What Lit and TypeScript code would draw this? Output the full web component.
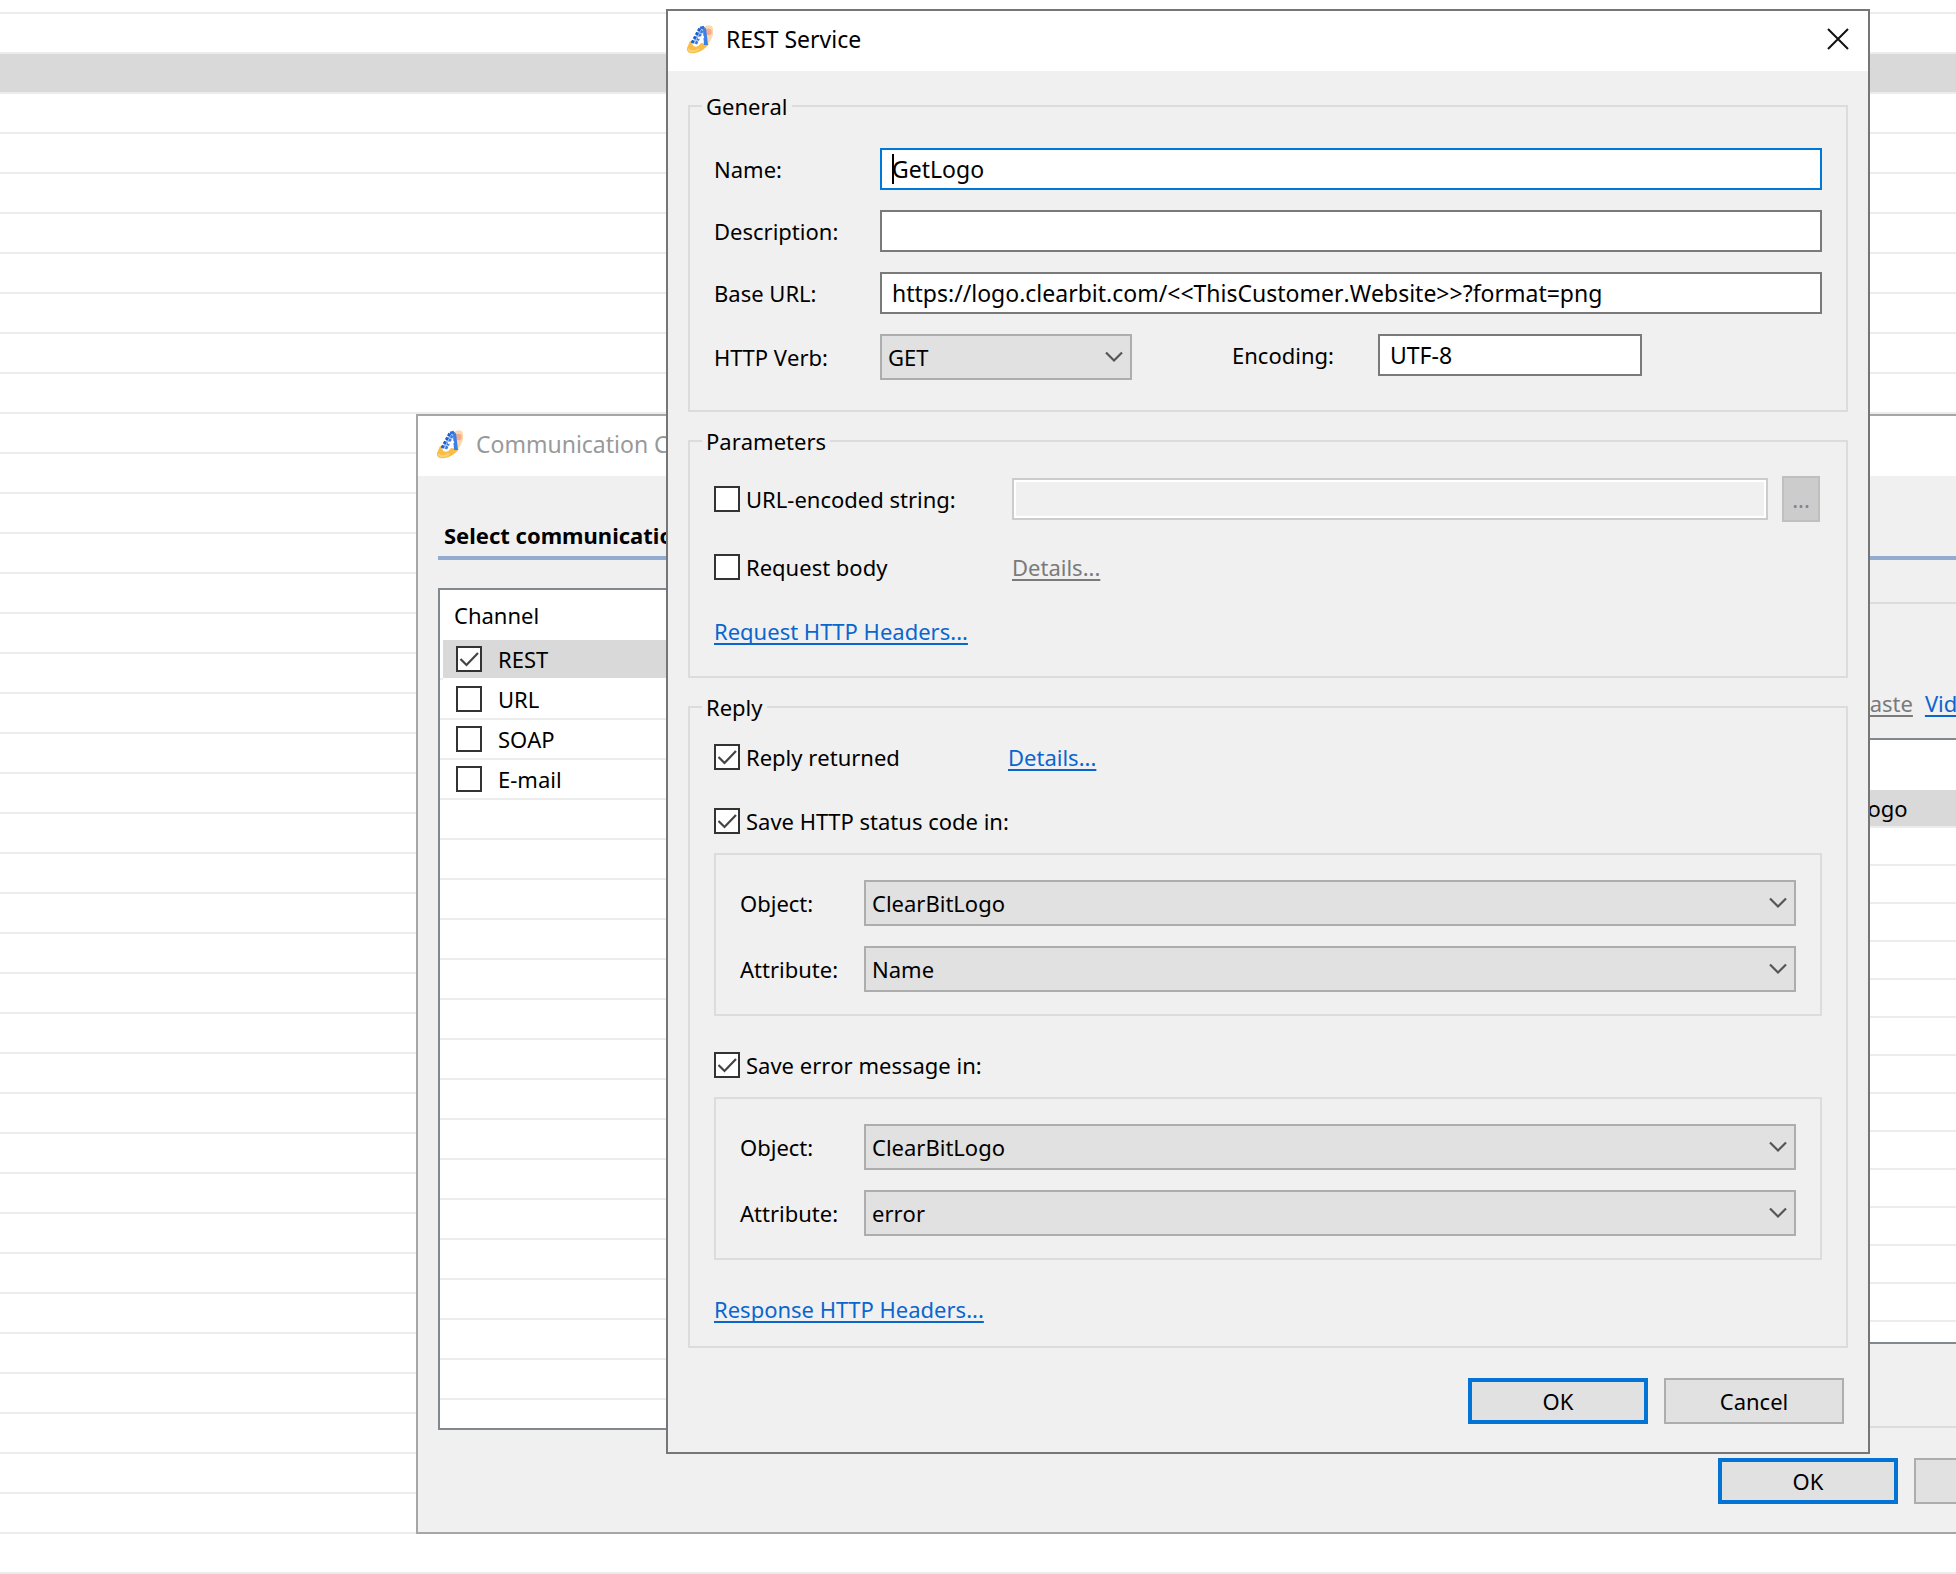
import { LitElement, html, svg, css } from "lit";
import { customElement } from "lit/decorators.js";

const shared = css`
  * {
    box-sizing: border-box;
  }
  :host {
    font: 22px/30px "Noto Sans", "Open Sans", sans-serif;
    font-kerning: none;
    color: #000;
  }
  button,
  input,
  select {
    font: inherit;
    font-kerning: none;
    color: inherit;
    margin: 0;
    border-radius: 0;
    outline: none;
  }
  a {
    color: #0a66cf;
    text-decoration: underline;
    text-decoration-thickness: 2px;
    text-underline-offset: 3px;
    text-decoration-skip-ink: none;
    white-space: nowrap;
  }
  a.off {
    color: #7a7a7a;
  }
  .titlebar {
    display: flex;
    align-items: center;
    height: 60px;
    padding: 0 19px 4px 18px;
    background: #fff;
  }
  .titlebar h1 {
    flex: 1;
    margin: 0 0 0 12px;
    font-size: 23px;
    line-height: 30px;
    font-weight: normal;
  }
  .titlebar svg {
    display: block;
  }
  .btn {
    width: 180px;
    height: 46px;
    padding: 0;
    border: 2px solid #adadad;
    background: #e1e1e1;
  }
  .btn.primary {
    border: 4px solid #0473d6;
  }
  .check {
    display: flex;
    align-items: center;
    gap: 6px;
    white-space: nowrap;
  }
  .box {
    display: grid;
    width: 26px;
    height: 26px;
  }
  .box > * {
    grid-area: 1 / 1;
  }
  .box input {
    appearance: none;
    width: 26px;
    height: 26px;
    border: 2px solid #333;
    background: #fff;
  }
  .box svg {
    display: none;
    pointer-events: none;
  }
  .box input:checked + svg {
    display: block;
  }
`;

const logo = svg`<svg width="28" height="30" viewBox="0 0 28 30" aria-hidden="true">
  <path d="M17 5 C19 0 27 0 27 5 C28 11 25 17 21 21 L17 15 Z" fill="#fbd9ae"/>
  <circle cx="22.500" cy="8" r="3.200" fill="#f6a98c"/>
  <path d="M4 17 L1 24 C0 28 4 30 9 29 C15 28 20 24 23 20 L15 19 C12 24 6 24 6 18 Z" fill="#f9bd45"/>
  <path d="M2 25 C4 28 9 28 13 25" fill="none" stroke="#fbd27a" stroke-width="2"/>
  <path d="M6 19 L14 4 L18 3 L10 20 Z" fill="#a9c8f2"/>
  <path d="M6 19 L14 4" stroke="#1d5fc9" stroke-width="3" stroke-dasharray="3 1.500"/>
  <path d="M10 20 L18 3" stroke="#3a7be0" stroke-width="2.500" stroke-dasharray="3 1"/>
  <path d="M14 4 L18 3" stroke="#2c6fd8" stroke-width="2.500"/>
  <path d="M17 5 L20 4 L22 21 L18 21 Z" fill="#3a80e6"/>
  <path d="M12 14 L18 13" stroke="#fff" stroke-width="2"/>
</svg>`;

const tick = svg`<svg width="26" height="26" viewBox="0 0 26 26" aria-hidden="true">
  <path d="M4.500 13 L10.500 19 L22 7" fill="none" stroke="#444" stroke-width="2.200"/>
</svg>`;

const chevron = svg`<svg class="chevron" width="18" height="12" viewBox="0 0 18 12" aria-hidden="true">
  <path d="M1 1.500 L9 9.500 L17 1.500" fill="none" stroke="#555" stroke-width="2.200"/>
</svg>`;

const checkbox = (label: string, checked: boolean) => html`
  <label class="check">
    <span class="box"><input type="checkbox" .checked=${checked} />${tick}</span>
    <span class="caption">${label}</span>
  </label>
`;

const dropdown = (id: string, value: string) => html`
  <span class="dropdown">
    <select id=${id}>
      <option>${value}</option>
    </select>
    ${chevron}
  </span>
`;

@customElement("channel-window")
class ChannelWindow extends LitElement {
  static styles = [
    shared,
    css`
      :host {
        display: flex;
        flex-direction: column;
        border: 2px solid #a6a6a6;
        background: #f0f0f0;
      }
      .titlebar h1 {
        color: #999;
      }
      .content {
        padding: 44px 20px 28px;
      }
      h2 {
        margin: 0;
        padding: 0 6px 6px;
        border-bottom: 4px solid #92abcf;
        font-size: 22px;
        line-height: 30px;
        font-weight: bold;
      }
      .columns {
        display: grid;
        grid-template-columns: 1fr 1fr;
        gap: 24px;
        margin-top: 28px;
      }
      .list {
        border: 2px solid #828790;
        background: #fff;
      }
      .channels {
        height: 842px;
        padding: 0 3px;
        background: repeating-linear-gradient(#fff 0 38px, #ececec 38px 40px) 0 50px / 100% 800px no-repeat #fff;
      }
      .head {
        height: 50px;
        padding: 10px 11px 0;
      }
      .channels .check {
        height: 40px;
        padding: 0 13px 2px;
        gap: 16px;
      }
      .channels .selected {
        height: 40px;
        border-bottom: 2px solid #fff;
        background: #d9d9d9;
      }
      .details {
        display: flex;
        flex-direction: column;
        height: 826px;
        margin-top: 14px;
        border: 2px solid #dcdcdc;
      }
      .links {
        display: flex;
        justify-content: flex-end;
        gap: 12px;
        padding: 84px 112px 20px 0;
      }
      .messages {
        height: 606px;
        margin: 0 18px;
        background: repeating-linear-gradient(#fff 0 36px, #ececec 36px 38px) 0 50px / 100% 800px no-repeat #fff;
      }
      .message {
        height: 36px;
        margin-top: 50px;
        line-height: 36px;
        padding-left: 518px;
        background: #d9d9d9;
      }
      .actions {
        display: flex;
        justify-content: flex-end;
        gap: 16px;
        padding: 28px 3px 0 0;
      }
    `,
  ];

  render() {
    return html`
      <header class="titlebar">${logo}<h1>Communication Channels</h1></header>
      <div class="content">
        <h2>Select communication channel</h2>
        <div class="columns">
          <section class="list channels">
            <div class="head">Channel</div>
            <div class="selected">${checkbox("REST", true)}</div>
            ${["URL", "SOAP", "E-mail"].map((name) => checkbox(name, false))}
          </section>
          <section class="details">
            <nav class="links">
              <a class="off" href="#paste" aria-disabled="true">Paste</a>
              <a href="#video">Video</a>
            </nav>
            <div class="list messages"><div class="message">GetLogo</div></div>
          </section>
        </div>
        <footer class="actions">
          <button class="btn primary">OK</button>
          <button class="btn">Cancel</button>
        </footer>
      </div>
    `;
  }
}

@customElement("rest-dialog")
class RestDialog extends LitElement {
  static styles = [
    shared,
    css`
      :host {
        display: block;
        border: 2px solid #767676;
        background: #f0f0f0;
      }
      .close {
        padding: 0;
        border: 0;
        background: none;
      }
      form {
        display: flex;
        flex-direction: column;
        gap: 14px;
        padding: 20px 20px 28px;
      }
      fieldset {
        display: flex;
        flex-direction: column;
        min-width: 0;
        margin: 0;
        border: 2px solid #dcdcdc;
      }
      legend {
        margin-left: -12px;
        padding: 0 4px;
      }
      .general {
        gap: 20px;
        padding: 27px 24px 30px;
      }
      .parameters {
        gap: 22px;
        padding: 20px 24px 26px;
      }
      .reply {
        padding: 12px 24px 14px;
      }
      .row {
        display: grid;
        grid-template-columns: 166px 1fr;
        align-items: center;
      }
      .split {
        display: flex;
        align-items: flex-start;
        gap: 100px;
      }
      .verb {
        display: grid;
        grid-template-columns: 166px 252px;
        align-items: center;
      }
      .encoding {
        display: grid;
        grid-template-columns: 146px 264px;
        align-items: center;
      }
      .text {
        width: 100%;
        height: 42px;
        padding: 0 10px;
        border: 2px solid #7a7a7a;
        background: #fff;
        font-size: 23px;
      }
      .active {
        border-color: #0078d7;
      }
      .text:disabled {
        border-color: #ccc;
        background: #f0f0f0;
        box-shadow: inset 0 0 0 2px #fff;
      }
      .field {
        position: relative;
        display: grid;
      }
      .caret {
        position: absolute;
        left: 12px;
        top: 6px;
        width: 2px;
        height: 30px;
        background: #000;
      }
      .dropdown {
        display: grid;
        align-items: center;
      }
      .dropdown > * {
        grid-area: 1 / 1;
      }
      .dropdown select {
        appearance: none;
        width: 100%;
        height: 46px;
        padding: 0 36px 0 6px;
        border: 2px solid #adadad;
        background: #e1e1e1;
      }
      .chevron {
        justify-self: end;
        margin-right: 9px;
        pointer-events: none;
      }
      .option {
        display: grid;
        grid-template-columns: 298px 1fr 38px;
        align-items: center;
        min-height: 46px;
        padding-right: 2px;
      }
      .option.short {
        grid-template-columns: 294px 1fr;
      }
      .option .text {
        width: calc(100% - 14px);
      }
      .parameters .headers {
        min-height: 38px;
      }
      .more {
        height: 46px;
        padding: 0;
        border: 2px solid #bfbfbf;
        background: #ccc;
        color: #838383;
      }
      .option + .option.stacked {
        margin-top: 18px;
      }
      .group {
        display: grid;
        gap: 20px;
        margin: 9px 0 26px;
        padding: 25px 24px 22px;
        border: 2px solid #dcdcdc;
      }
      .group .row {
        grid-template-columns: 124px 1fr;
      }
      .actions {
        display: flex;
        justify-content: flex-end;
        gap: 16px;
        padding: 16px 4px 0 0;
      }
    `,
  ];

  private target(prefix: string, object: string, attribute: string) {
    return html`
      <div class="group">
        <div class="row">
          <label for="${prefix}-object">Object:</label>${dropdown(`${prefix}-object`, object)}
        </div>
        <div class="row">
          <label for="${prefix}-attribute">Attribute:</label>${dropdown(`${prefix}-attribute`, attribute)}
        </div>
      </div>
    `;
  }

  render() {
    return html`
      <header class="titlebar">
        ${logo}
        <h1>REST Service</h1>
        <button class="close" aria-label="Close">
          <svg width="22" height="22" viewBox="0 0 22 22" aria-hidden="true">
            <path d="M1 1 L21 21 M21 1 L1 21" fill="none" stroke="#111" stroke-width="2" />
          </svg>
        </button>
      </header>
      <form @submit=${(e: Event) => e.preventDefault()}>
        <fieldset class="general">
          <legend>General</legend>
          <div class="row">
            <label for="name">Name:</label>
            <span class="field">
              <input class="text active" id="name" .value=${"GetLogo"} />
              <span class="caret"></span>
            </span>
          </div>
          <div class="row">
            <label for="description">Description:</label>
            <input class="text" id="description" />
          </div>
          <div class="row">
            <label for="url">Base URL:</label>
            <input
              class="text"
              id="url"
              .value=${"https://logo.clearbit.com/<<ThisCustomer.Website>>?format=png"}
            />
          </div>
          <div class="split">
            <div class="verb"><label for="verb">HTTP Verb:</label>${dropdown("verb", "GET")}</div>
            <div class="encoding">
              <label for="encoding">Encoding:</label>
              <input class="text" id="encoding" .value=${"UTF-8"} />
            </div>
          </div>
        </fieldset>

        <fieldset class="parameters">
          <legend>Parameters</legend>
          <div class="option">
            ${checkbox("URL-encoded string:", false)}
            <input class="text" aria-label="URL-encoded string" disabled />
            <button class="more" type="button" disabled>...</button>
          </div>
          <div class="option">
            ${checkbox("Request body", false)}
            <span><a class="off" href="#body" aria-disabled="true">Details...</a></span>
          </div>
          <div class="option headers"><a href="#request-headers">Request HTTP Headers...</a></div>
        </fieldset>

        <fieldset class="reply">
          <legend>Reply</legend>
          <div class="option short">
            ${checkbox("Reply returned", true)}
            <span><a href="#reply">Details...</a></span>
          </div>
          <div class="option stacked">${checkbox("Save HTTP status code in:", true)}</div>
          ${this.target("status", "ClearBitLogo", "Name")}
          <div class="option">${checkbox("Save error message in:", true)}</div>
          ${this.target("error", "ClearBitLogo", "error")}
          <div class="option"><a href="#response-headers">Response HTTP Headers...</a></div>
        </fieldset>

        <footer class="actions">
          <button class="btn primary">OK</button>
          <button class="btn" type="button">Cancel</button>
        </footer>
      </form>
    `;
  }
}

@customElement("app-root")
class AppRoot extends LitElement {
  static styles = css`
    * {
      box-sizing: border-box;
    }
    :host {
      position: relative;
      display: block;
      min-height: 100vh;
      overflow: hidden;
      background: repeating-linear-gradient(#fff 0 38px, #ececec 38px 40px) 0 -26px / 100% 4000px #fff;
    }
    .rows {
      padding-top: 54px;
    }
    .current {
      height: 38px;
      background: #d9d9d9;
    }
    channel-window {
      position: absolute;
      left: 416px;
      top: 414px;
      right: -163px;
    }
    rest-dialog {
      position: absolute;
      left: 666px;
      top: 9px;
      right: 86px;
    }
  `;

  render() {
    return html`
      <div class="rows"><div class="current"></div></div>
      <channel-window></channel-window>
      <rest-dialog></rest-dialog>
    `;
  }
}
